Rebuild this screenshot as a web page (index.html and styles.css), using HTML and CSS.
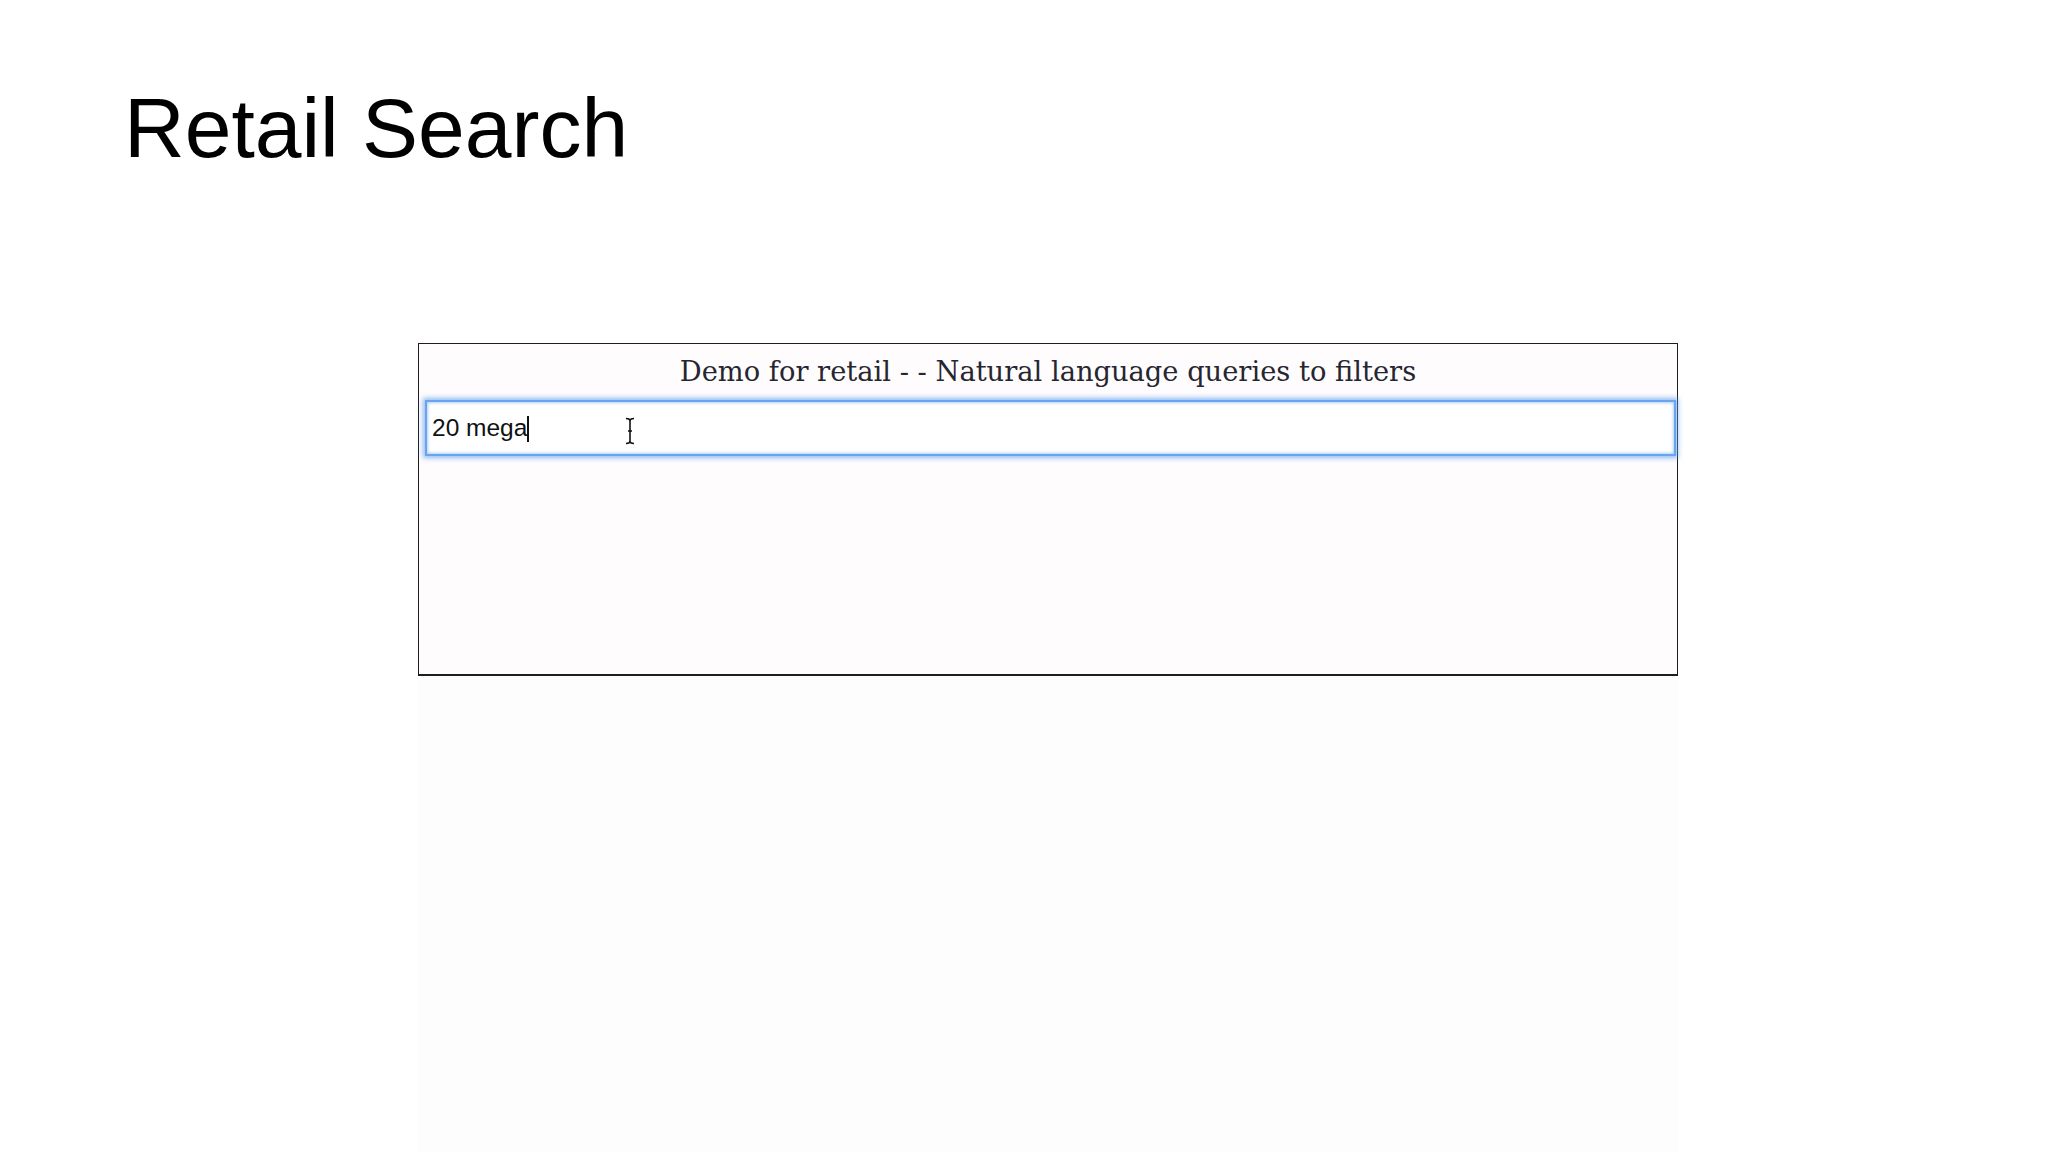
FILE: index.html
```html
<!DOCTYPE html>
<html lang="en">
<head>
  <meta charset="UTF-8">
  <meta name="viewport" content="width=device-width, initial-scale=1.0">
  <link rel="stylesheet" href="styles.css">
  <title>Retail Search</title>
</head>
<body>

<h1 class="slide-title">Retail Search</h1>

<div class="stage">
  <div class="demo">
    <h2 class="demo-title">Demo for retail - - Natural language queries to filters</h2>
    <div class="query">
      <span class="query-text">20 mega</span><span class="caret"></span>
      <svg class="ibeam" width="10" height="28" viewBox="0 0 10 28">
        <path d="M1 1.5 Q5 1.5 5 4 Q5 1.5 9 1.5 M5 4 V24 M1 26.5 Q5 26.5 5 24 Q5 26.5 9 26.5 M3 14 H7" fill="none" stroke="#111" stroke-width="1.6"/>
      </svg>
    </div>
  </div>
</div>

</body>
</html>
```

FILE: styles.css
```css
html, body {
  height: 100%;
}

body {
  margin: 0;
  padding: 0;
  background-color: #fff;
  font-family: "Liberation Sans", Arial, sans-serif;
  display: flex;
  flex-direction: column;
}

.slide-title {
  margin: 86px 0 0 124px;
  font-size: 84px;
  line-height: 84px;
  font-weight: normal;
  color: #000;
}

.stage {
  flex: 1;
  margin: 173px 0 0 418px;
  width: 1260px;
  background-color: #fdfdfd;
}

.demo {
  height: 330px;
  background-color: #fefcfd;
  border: 1px solid #1e1e1e;
  border-bottom-width: 2px;
}

.demo-title {
  margin: 10px 0 0;
  font-family: "DejaVu Serif", Georgia, serif;
  font-size: 27.3px;
  line-height: 36px;
  font-weight: normal;
  text-align: center;
  color: #262630;
}

.query {
  position: relative;
  box-sizing: border-box;
  margin: 10px 0 0 6px;
  width: 1251px;
  height: 56px;
  padding: 11px 0 0 5px;
  background-color: #fff;
  border: 2px solid #6aa3ee;
  box-shadow: 0 0 5px 2px rgba(95, 160, 240, 0.7), inset 0 0 3px 1px rgba(95, 160, 240, 0.5);
  font-size: 24.5px;
  line-height: 30px;
  color: #111;
}

.caret {
  display: inline-block;
  width: 0;
  height: 26px;
  border-left: 2px solid #111;
  vertical-align: -6px;
}

.ibeam {
  position: absolute;
  left: 198px;
  top: 15px;
}
```
